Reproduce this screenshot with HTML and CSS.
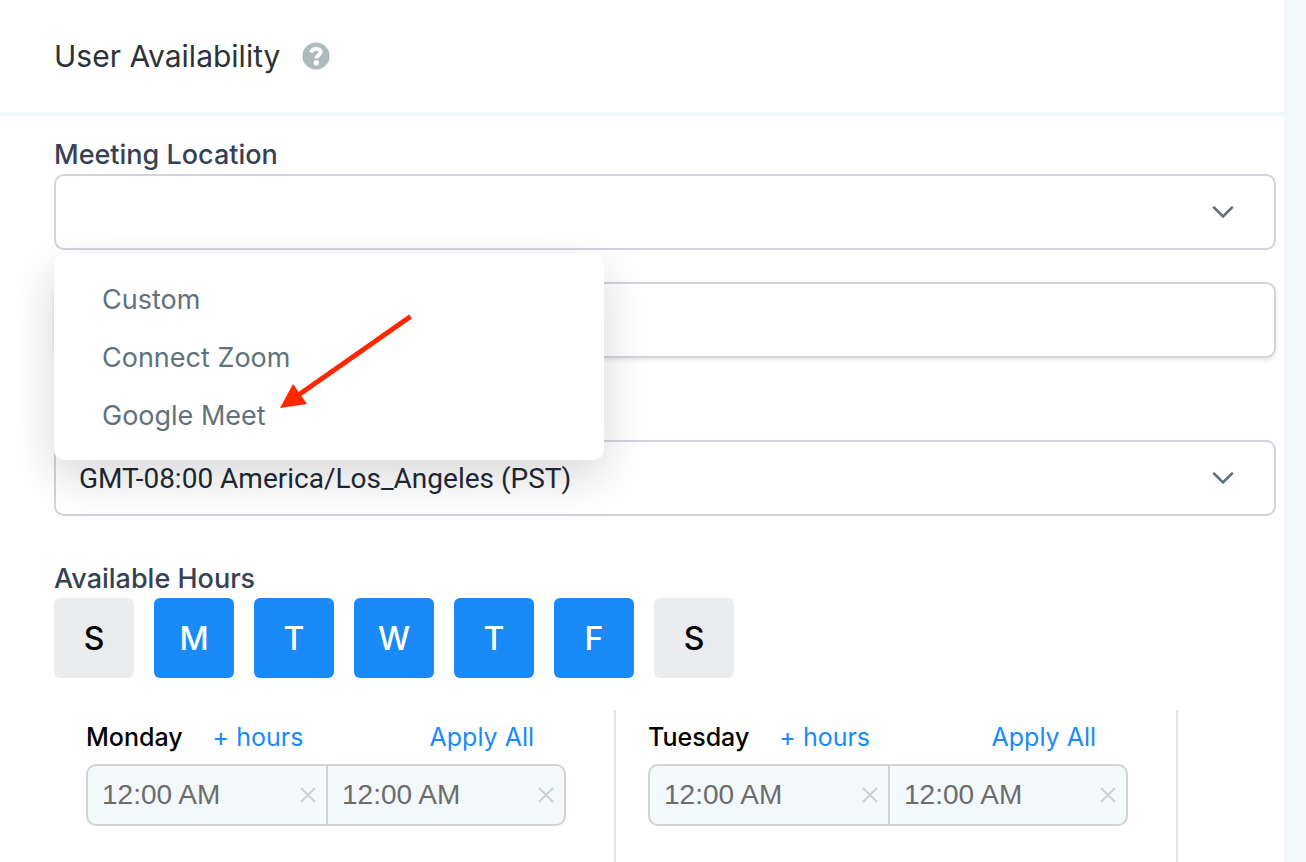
FILE: index.html
```html
<!DOCTYPE html>
<html lang="en">
<head>
<meta charset="utf-8">
<meta name="viewport" content="width=device-width, initial-scale=1">
<title>User Availability</title>
<link rel="stylesheet" href="styles.css">
</head>
<body>
<main class="panel">
  <header class="panel-header">
    <h1 class="title">User Availability</h1>
    <button class="help" type="button" aria-label="Help">
      <svg width="28" height="28" viewBox="0 0 28 28" aria-hidden="true">
        <circle cx="14" cy="14" r="13.6" fill="#b0babd"/>
        <path d="M8.800 10.300C9.900 8.100 11.700 6.900 14.200 6.900C17 6.900 18.700 8.300 18.700 10.200C18.700 13 14.300 13.100 14.300 16.600" fill="none" stroke="#fff" stroke-width="3.900"/>
        <circle cx="14.300" cy="20.900" r="2.600" fill="#fff"/>
      </svg>
    </button>
  </header>

  <form class="form">
    <label class="label" for="location">Meeting Location</label>
    <div class="select-wrap">
      <select class="field" id="location"><option></option></select>
      <svg class="chevron" width="24" height="16" viewBox="0 0 24 16" aria-hidden="true"><path d="M3 3.500L12 12.500L21 3.500"/></svg>
      <ul class="menu">
        <li><button class="menu-item" type="button">Custom</button></li>
        <li><button class="menu-item" type="button">Connect Zoom</button></li>
        <li><button class="menu-item" type="button">Google Meet</button></li>
        <li class="pointer" aria-hidden="true">
          <svg width="134" height="98" viewBox="0 0 134 98"><path d="M130.500 2.500L17 82" stroke="#ff2600" stroke-width="5"/><path d="M0 94L13 70L27 90Z" fill="#ff2600"/></svg>
        </li>
      </ul>
    </div>
    <input class="field details" type="text" aria-label="Location details">
    <div class="select-wrap timezone">
      <select class="field" aria-label="Time zone"><option>GMT-08:00 America/Los_Angeles (PST)</option></select>
      <svg class="chevron" width="24" height="16" viewBox="0 0 24 16" aria-hidden="true"><path d="M3 3.500L12 12.500L21 3.500"/></svg>
    </div>

    <h2 class="label">Available Hours</h2>
    <div class="days">
      <button class="day" type="button" aria-pressed="false">S</button>
      <button class="day on" type="button" aria-pressed="true">M</button>
      <button class="day on" type="button" aria-pressed="true">T</button>
      <button class="day on" type="button" aria-pressed="true">W</button>
      <button class="day on" type="button" aria-pressed="true">T</button>
      <button class="day on" type="button" aria-pressed="true">F</button>
      <button class="day" type="button" aria-pressed="false">S</button>
    </div>

    <div class="schedule">
      <section class="column">
        <div class="column-head">
          <h3 class="day-name">Monday</h3>
          <a class="link" href="#">+ hours</a>
          <a class="link apply" href="#">Apply All</a>
        </div>
        <div class="range">
          <div class="time"><input type="text" value="12:00 AM" aria-label="Monday start"><button type="button" class="clear" aria-label="Clear"><svg width="16" height="16" viewBox="0 0 16 16"><path d="M1 1L15 15M15 1L1 15"/></svg></button></div>
          <div class="time"><input type="text" value="12:00 AM" aria-label="Monday end"><button type="button" class="clear" aria-label="Clear"><svg width="16" height="16" viewBox="0 0 16 16"><path d="M1 1L15 15M15 1L1 15"/></svg></button></div>
        </div>
      </section>
      <section class="column">
        <div class="column-head">
          <h3 class="day-name">Tuesday</h3>
          <a class="link" href="#">+ hours</a>
          <a class="link apply" href="#">Apply All</a>
        </div>
        <div class="range">
          <div class="time"><input type="text" value="12:00 AM" aria-label="Tuesday start"><button type="button" class="clear" aria-label="Clear"><svg width="16" height="16" viewBox="0 0 16 16"><path d="M1 1L15 15M15 1L1 15"/></svg></button></div>
          <div class="time"><input type="text" value="12:00 AM" aria-label="Tuesday end"><button type="button" class="clear" aria-label="Clear"><svg width="16" height="16" viewBox="0 0 16 16"><path d="M1 1L15 15M15 1L1 15"/></svg></button></div>
        </div>
      </section>
    </div>
  </form>
</main>
</body>
</html>
```

FILE: styles.css
```css
* { box-sizing: border-box; }

body {
  margin: 0;
  min-height: 100vh;
  display: flex;
  padding-right: 22px;
  background: #f2f7fa;
  font-family: Inter, "Liberation Sans", sans-serif;
}

button, input, select { font: inherit; }

button {
  padding: 0;
  border: 0;
  background: none;
}

h1, h2, h3, ul { margin: 0; padding: 0; }

.panel {
  flex: 1;
  min-width: 0;
  background: #fff;
}

.panel-header {
  display: flex;
  align-items: center;
  gap: 22px;
  height: 116px;
  padding: 0 54px;
  border-bottom: 4px solid #f2f7fa;
}

.title {
  color: #2b3338;
  font-size: 30px;
  font-weight: 400;
  line-height: 40px;
}

.help, .help svg { display: block; }

.form { padding: 20px 8px 0 54px; }

.label {
  display: block;
  color: #374154;
  font-size: 27px;
  font-weight: 500;
  line-height: 38px;
}

.select-wrap { position: relative; }

.field {
  display: block;
  width: 100%;
  height: 76px;
  padding: 0 72px 0 23px;
  border: 2px solid #d1d5db;
  border-radius: 10px;
  background: #fff;
  color: #1f2937;
  font-family: Roboto, sans-serif;
  font-size: 28px;
  appearance: none;
}

.chevron {
  position: absolute;
  top: 30px;
  right: 41px;
  fill: none;
  stroke: #607079;
  stroke-width: 2.500;
  stroke-linecap: round;
  pointer-events: none;
}

.details {
  margin-top: 32px;
  box-shadow: 0 2px 4px rgba(0, 0, 0, 0.1);
}

.timezone { margin: 82px 0 44px; }

.menu {
  position: absolute;
  z-index: 2;
  top: 80px;
  left: 0;
  width: 550px;
  padding: 16px 0;
  border-radius: 10px;
  background: #fff;
  box-shadow: 0 16px 48px rgba(0, 0, 0, 0.16);
  list-style: none;
}

.menu-item {
  display: block;
  width: 100%;
  height: 58px;
  padding: 0 48px;
  color: #61727b;
  font-size: 27px;
  text-align: left;
}

.pointer {
  position: absolute;
  top: 60px;
  left: 226px;
}

.pointer svg { display: block; }

.days {
  display: flex;
  gap: 20px;
}

.day {
  width: 80px;
  height: 80px;
  border-radius: 6px;
  background: #ebecee;
  color: #000;
  font-size: 32px;
  font-weight: 500;
}

.day.on {
  background: #198af7;
  color: #fff;
}

.schedule {
  display: flex;
  margin-top: 32px;
}

.column {
  flex: 0 1 562px;
  min-height: 152px;
  padding: 8px 48px 0 32px;
  border-right: 2px solid #e4e4e4;
}

.column-head {
  display: flex;
  align-items: center;
  gap: 30px;
  height: 46px;
  padding: 0 32px 8px 0;
}

.day-name, .link {
  font-size: 25px;
  line-height: 38px;
}

.day-name {
  color: #000;
  font-weight: 500;
}

.link {
  color: #198af7;
  text-decoration: none;
}

.apply { margin-left: auto; }

.range {
  display: flex;
  height: 62px;
  overflow: hidden;
  border: 2px solid #d2d2d2;
  border-radius: 10px;
  background: #f3f8fb;
}

.time {
  display: flex;
  width: 50%;
  align-items: center;
  padding: 0 10px 0 14px;
}

.time + .time { border-left: 2px solid #d2d2d2; }

.time input {
  flex: 1;
  width: 0;
  padding: 0;
  border: 0;
  background: none;
  color: #6c6c6c;
  font-family: "Liberation Sans", sans-serif;
  font-size: 28px;
}

.clear svg {
  display: block;
  fill: none;
  stroke: #d0d0d0;
  stroke-width: 2;
}
```
